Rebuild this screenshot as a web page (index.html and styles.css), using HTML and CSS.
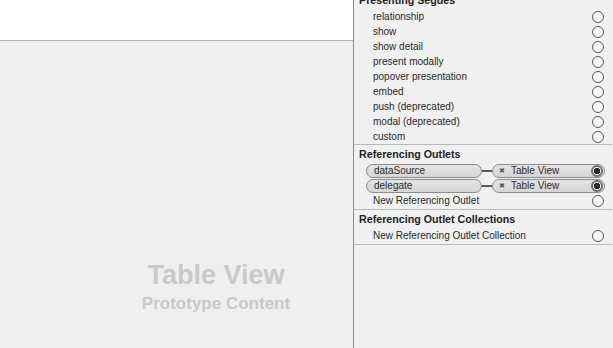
FILE: index.html
```html
<!DOCTYPE html>
<html lang="en">
<head>
  <meta charset="UTF-8" />
  <title>Connections Inspector</title>
  <link rel="stylesheet" href="styles.css">
</head>
<body>
  <div class="canvas">
    <div class="canvas-top"></div>
    <div class="canvas-body">
      <div class="placeholder-title">Table View</div>
      <div class="placeholder-sub">Prototype Content</div>
    </div>
  </div>

  <div class="inspector">
    <div class="section first">
      <div class="section-title">Presenting Segues</div>
      <div class="row"><span class="label">relationship</span><span class="radio"></span></div>
      <div class="row"><span class="label">show</span><span class="radio"></span></div>
      <div class="row"><span class="label">show detail</span><span class="radio"></span></div>
      <div class="row"><span class="label">present modally</span><span class="radio"></span></div>
      <div class="row"><span class="label">popover presentation</span><span class="radio"></span></div>
      <div class="row"><span class="label">embed</span><span class="radio"></span></div>
      <div class="row"><span class="label">push (deprecated)</span><span class="radio"></span></div>
      <div class="row"><span class="label">modal (deprecated)</span><span class="radio"></span></div>
      <div class="row"><span class="label">custom</span><span class="radio"></span></div>
    </div>

    <div class="section">
      <div class="section-title">Referencing Outlets</div>
      <div class="row outlet">
        <span class="pill source">dataSource</span>
        <span class="link"></span>
        <span class="pill target"><span class="remove">✖</span>Table View<span class="radio on"></span></span>
      </div>
      <div class="row outlet">
        <span class="pill source">delegate</span>
        <span class="link"></span>
        <span class="pill target"><span class="remove">✖</span>Table View<span class="radio on"></span></span>
      </div>
      <div class="row"><span class="label">New Referencing Outlet</span><span class="radio"></span></div>
    </div>

    <div class="section">
      <div class="section-title">Referencing Outlet Collections</div>
      <div class="row"><span class="label">New Referencing Outlet Collection</span><span class="radio"></span></div>
    </div>
  </div>
</body>
</html>
```

FILE: styles.css
```css
body {
  margin: 0;
  width: 613px;
  height: 348px;
  overflow: hidden;
  display: flex;
  font-family: 'Liberation Sans', Arial, sans-serif;
  background: #efefef;
}

.canvas {
  width: 353px;
  display: flex;
  flex-direction: column;
}

.canvas-top {
  height: 40px;
  background: #ffffff;
  border-bottom: 1px solid #b3b3b3;
}

.canvas-body {
  flex: 1;
  background: #efefef;
  padding-top: 219px;
  padding-left: 79px;
  text-align: center;
  color: #c9c9c9;
  font-weight: bold;
}

.placeholder-title {
  font-size: 27px;
  line-height: 30px;
}

.placeholder-sub {
  font-size: 17px;
  line-height: 20px;
  margin-top: 4px;
}

.inspector {
  width: 258px;
  border-left: 1px solid #8a8a8a;
  background: #f0f0f0;
  display: flex;
  flex-direction: column;
  margin-top: -9px;
}

.section {
  border-top: 1px solid #b9b9b9;
  padding-bottom: 1px;
}

.section.first {
  border-top: none;
  padding-bottom: 0;
}

.section:last-child {
  border-bottom: 1px solid #b9b9b9;
}

.section-title {
  height: 18px;
  line-height: 18px;
  padding-left: 5px;
  font-size: 10.7px;
  font-weight: bold;
  color: #222;
}

.row {
  height: 15px;
  display: flex;
  align-items: center;
  padding-left: 19px;
  padding-right: 8px;
  font-size: 10px;
  color: #2a2a2a;
}

.label {
  flex: 1;
}

.radio {
  width: 10px;
  height: 10px;
  border: 1px solid #555;
  border-radius: 50%;
  background: #f8f8f8;
  box-sizing: content-box;
  flex-shrink: 0;
}

.radio.on {
  width: 8px;
  height: 8px;
  border: 2px solid #707070;
  background: radial-gradient(circle, #2c2c2c 0 3px, #f4f4f4 3.5px);
  margin-left: auto;
  margin-right: 1px;
}

.row.outlet {
  padding-left: 12px;
  padding-right: 7px;
}

.pill {
  height: 12px;
  line-height: 12px;
  border: 1px solid #8c8c8c;
  border-radius: 7px;
  background: linear-gradient(#e4e4e4, #d6d6d6);
  display: flex;
  align-items: center;
  box-sizing: content-box;
}

.pill.source {
  width: 107px;
  padding-left: 7px;
}

.link {
  width: 10px;
  height: 2px;
  background: #5a5a5a;
}

.pill.target {
  flex: 1;
  padding-left: 6px;
}

.remove {
  font-size: 7px;
  color: #555;
  margin-right: 6px;
}
```
